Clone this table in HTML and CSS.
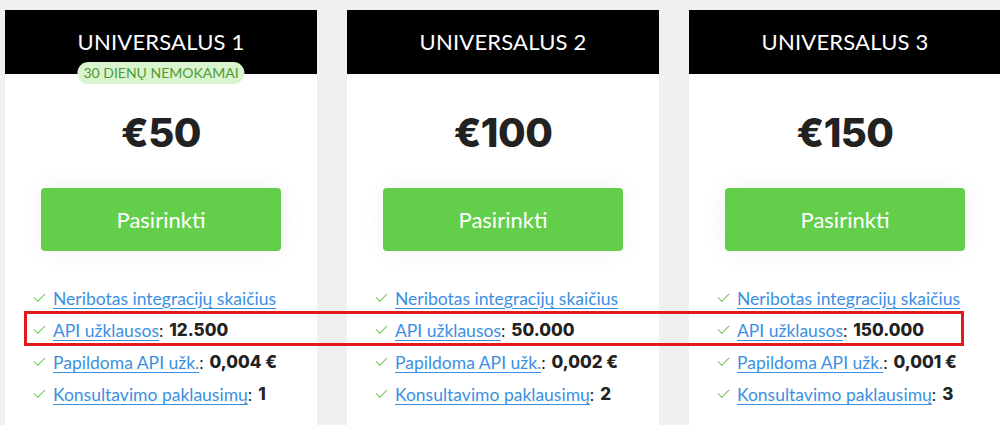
FILE: index.html
```html
<!DOCTYPE html>
<html lang="lt">
<head>
    <meta charset="UTF-8">
    <meta name="viewport" content="width=device-width, initial-scale=1.0">
    <title>Planai</title>
    <link rel="stylesheet" href="styles.css">
</head>
<body>
    <div class="plans">
        <!-- Plan 1 -->
        <div class="plan">
            <div class="plan-head">
                <h2>UNIVERSALUS 1</h2>
                <span class="badge">30 DIENŲ NEMOKAMAI</span>
            </div>
            <div class="price">€50</div>
            <a href="#" class="btn">Pasirinkti</a>
            <ul class="features">
                <li><span class="check"></span><a href="#">Neribotas integracijų skaičius</a></li>
                <li><span class="check"></span><a href="#">API užklausos</a>: <b>12.500</b></li>
                <li><span class="check"></span><a href="#">Papildoma API užk.</a>: <b>0,004 €</b></li>
                <li><span class="check"></span><a href="#">Konsultavimo paklausimų</a>: <b>1</b></li>
            </ul>
        </div>

        <!-- Plan 2 -->
        <div class="plan">
            <div class="plan-head">
                <h2>UNIVERSALUS 2</h2>
            </div>
            <div class="price">€100</div>
            <a href="#" class="btn">Pasirinkti</a>
            <ul class="features">
                <li><span class="check"></span><a href="#">Neribotas integracijų skaičius</a></li>
                <li><span class="check"></span><a href="#">API užklausos</a>: <b>50.000</b></li>
                <li><span class="check"></span><a href="#">Papildoma API užk.</a>: <b>0,002 €</b></li>
                <li><span class="check"></span><a href="#">Konsultavimo paklausimų</a>: <b>2</b></li>
            </ul>
        </div>

        <!-- Plan 3 -->
        <div class="plan">
            <div class="plan-head">
                <h2>UNIVERSALUS 3</h2>
            </div>
            <div class="price">€150</div>
            <a href="#" class="btn">Pasirinkti</a>
            <ul class="features">
                <li><span class="check"></span><a href="#">Neribotas integracijų skaičius</a></li>
                <li><span class="check"></span><a href="#">API užklausos</a>: <b>150.000</b></li>
                <li><span class="check"></span><a href="#">Papildoma API užk.</a>: <b>0,001 €</b></li>
                <li><span class="check"></span><a href="#">Konsultavimo paklausimų</a>: <b>3</b></li>
            </ul>
        </div>

        <!-- highlight over the API row -->
        <div class="highlight"></div>
    </div>
</body>
</html>
```

FILE: styles.css
```css
* {
    margin: 0;
    padding: 0;
    box-sizing: border-box;
}

body {
    font-family: Lato, "Open Sans", sans-serif;
    background: #f0f0f0;
    color: #222;
    overflow: hidden;
}

.plans {
    position: relative;
    display: flex;
    gap: 30px;
    padding: 10px 0 0 5px;
    width: 1040px;
}

.plan {
    flex: 0 0 312px;
    height: 420px;
    background: #fff;
}

.plan-head {
    position: relative;
    height: 64px;
    background: #000;
    display: flex;
    align-items: center;
    justify-content: center;
}

.plan-head h2 {
    color: #fff;
    font-weight: 400;
    font-size: 22px;
    letter-spacing: 0.2px;
    padding-bottom: 2px;
}

.badge {
    position: absolute;
    left: 50%;
    top: 52px;
    transform: translateX(-50%);
    background: #d9f5d0;
    color: #4f9a33;
    font-size: 14px;
    line-height: 22px;
    padding: 0 6px;
    border-radius: 11px;
    white-space: nowrap;
}

.price {
    text-align: center;
    font-family: Inter, sans-serif;
    font-weight: 800;
    font-size: 40px;
    letter-spacing: -0.5px;
    margin-top: 34px;
    line-height: 50px;
}

.btn {
    display: flex;
    align-items: center;
    justify-content: center;
    width: 240px;
    height: 63px;
    margin: 30px auto 0;
    background: #62ce4a;
    color: #fff;
    font-size: 22px;
    text-decoration: none;
    border-radius: 4px;
    box-shadow: 0 0 25px rgba(0, 0, 0, 0.06);
}

.features {
    list-style: none;
    margin-top: 31px;
    padding-left: 28px;
}

.features li {
    display: flex;
    align-items: center;
    height: 32px;
    font-size: 17.5px;
    white-space: nowrap;
}

.features a {
    color: #3b8fe3;
    text-decoration: underline;
    text-underline-offset: 3px;
}

.features b {
    font-family: Inter, sans-serif;
    font-weight: 800;
    font-size: 17px;
    margin-left: 6px;
}

.check {
    width: 11px;
    height: 6px;
    border-left: 1.5px solid #6fc957;
    border-bottom: 1.5px solid #6fc957;
    transform: rotate(-45deg);
    margin: 0 8px 4px 1px;
}

.highlight {
    position: absolute;
    left: 24px;
    top: 311px;
    width: 940px;
    height: 35px;
    border: 3px solid #e3191c;
}
```
